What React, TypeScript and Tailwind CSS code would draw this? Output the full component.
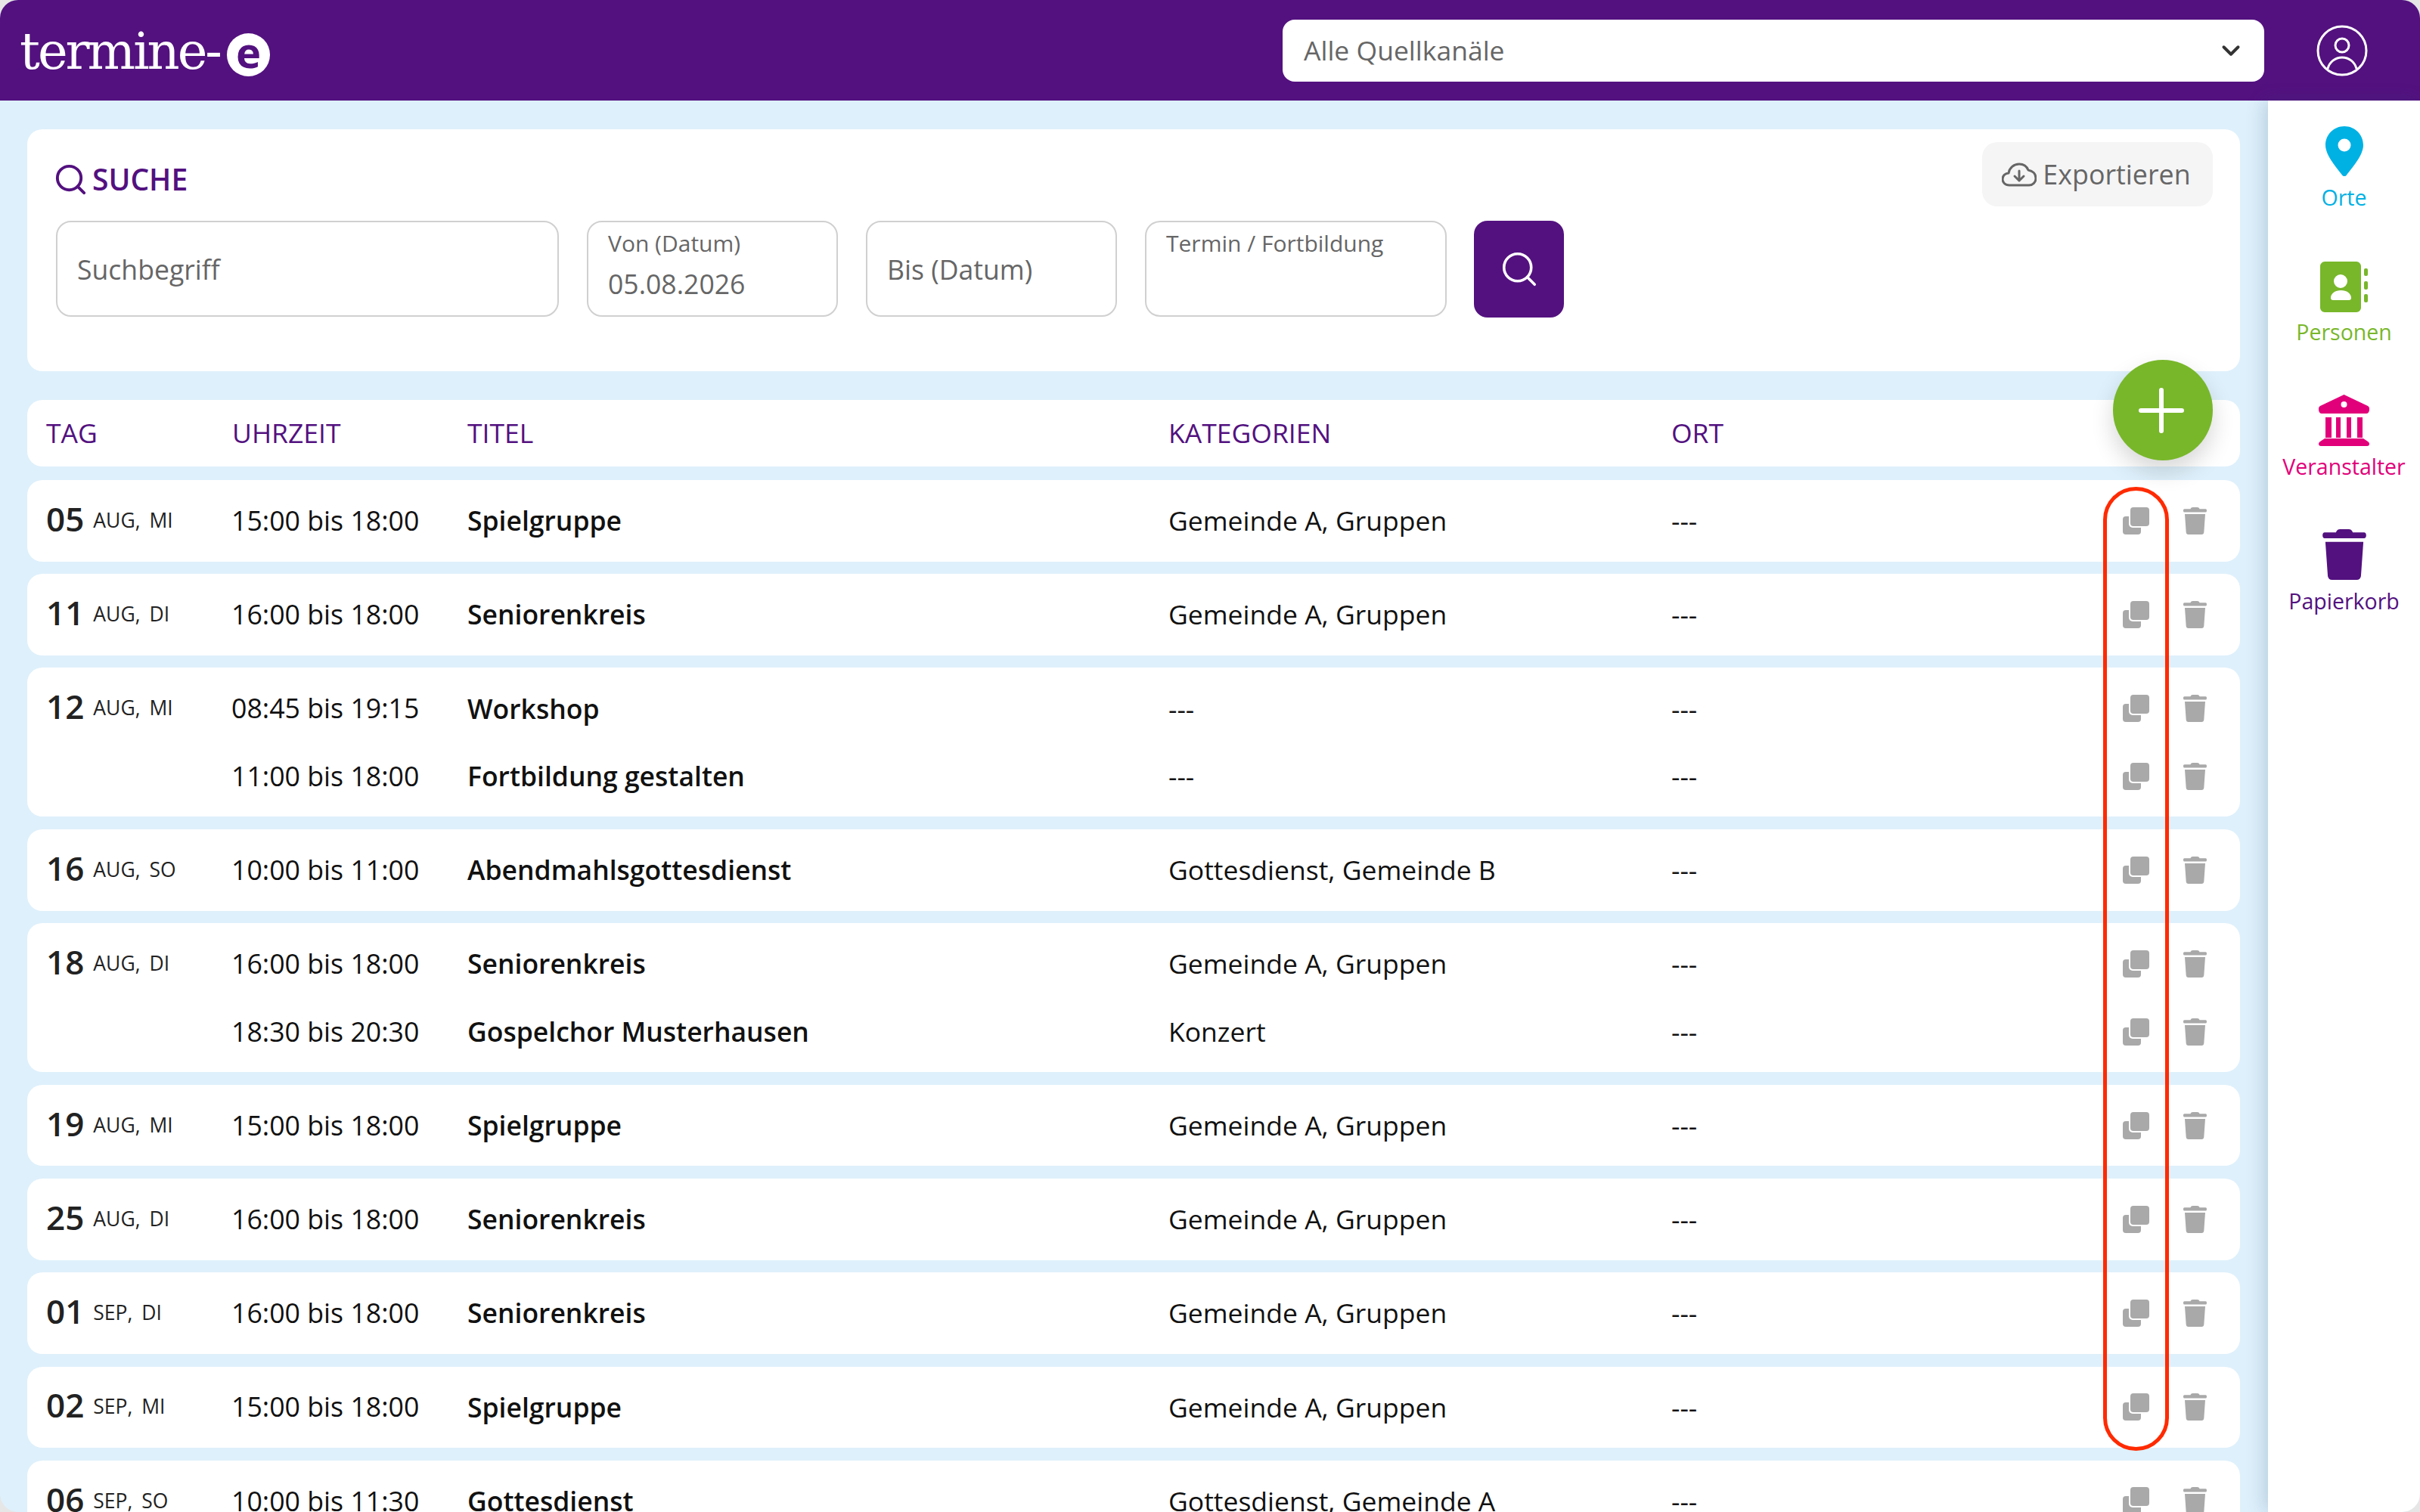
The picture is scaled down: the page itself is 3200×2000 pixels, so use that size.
import { ChevronDown, Search } from "lucide-react";

const sans = "font-['Open_Sans',sans-serif]";

type Line = { time: string; title: string; cats: string };
type Row = { day: string; label: string; lines: Line[] };

const catA = "Gemeinde A, Gruppen";

const rows: Row[] = [
	{ day: "05", label: "AUG, MI", lines: [{ time: "15:00 bis 18:00", title: "Spielgruppe", cats: catA }] },
	{ day: "11", label: "AUG, DI", lines: [{ time: "16:00 bis 18:00", title: "Seniorenkreis", cats: catA }] },
	{
		day: "12",
		label: "AUG, MI",
		lines: [
			{ time: "08:45 bis 19:15", title: "Workshop", cats: "---" },
			{ time: "11:00 bis 18:00", title: "Fortbildung gestalten", cats: "---" },
		],
	},
	{ day: "16", label: "AUG, SO", lines: [{ time: "10:00 bis 11:00", title: "Abendmahlsgottesdienst", cats: "Gottesdienst, Gemeinde B" }] },
	{
		day: "18",
		label: "AUG, DI",
		lines: [
			{ time: "16:00 bis 18:00", title: "Seniorenkreis", cats: catA },
			{ time: "18:30 bis 20:30", title: "Gospelchor Musterhausen", cats: "Konzert" },
		],
	},
	{ day: "19", label: "AUG, MI", lines: [{ time: "15:00 bis 18:00", title: "Spielgruppe", cats: catA }] },
	{ day: "25", label: "AUG, DI", lines: [{ time: "16:00 bis 18:00", title: "Seniorenkreis", cats: catA }] },
	{ day: "01", label: "SEP, DI", lines: [{ time: "16:00 bis 18:00", title: "Seniorenkreis", cats: catA }] },
	{ day: "02", label: "SEP, MI", lines: [{ time: "15:00 bis 18:00", title: "Spielgruppe", cats: catA }] },
	{ day: "06", label: "SEP, SO", lines: [{ time: "10:00 bis 11:30", title: "Gottesdienst", cats: "Gottesdienst, Gemeinde A" }] },
];

function CopyIcon() {
	return (
		<svg viewBox="0 0 35 36" className="w-[35px] h-[36px]">
			<rect x="0" y="12" width="24" height="24" rx="4" fill="#a9a9a9" />
			<rect x="8" y="0" width="27" height="27" rx="5" fill="#fff" />
			<rect x="10" y="0" width="25" height="25" rx="4" fill="#a9a9a9" />
		</svg>
	);
}

function TrashIcon({ className }: { className: string }) {
	return (
		<svg viewBox="0 0 31 36" className={className}>
			<path d="M9.500 2.300C10 .8 11 0 12.500 0h6c1.500 0 2.500.8 3 2.300h8c.9 0 1.500.9 1.500 2.100s-.6 2.100-1.500 2.100h-28C.6 6.500 0 5.600 0 4.400s.6-2.100 1.500-2.100z" />
			<path d="M2 9h27l-1.700 24c-.1 1.800-1.300 3-3 3H6.700c-1.700 0-2.900-1.200-3-3z" />
		</svg>
	);
}

function Field({ label, value, className }: { label?: string; value?: string; className: string }) {
	return (
		<div className={`h-[127px] rounded-[20px] border-2 border-[#d0d0d0] px-[26px] flex flex-col justify-center text-[#666] ${label ? "pb-[10px]" : ""} ${className}`}>
			{label && <div className="text-[30px] leading-[40px] mb-[9px]">{label}</div>}
			{value && <div className="text-[35.600px] leading-[48px]">{value}</div>}
		</div>
	);
}

function SideItem({ label, color, icon }: { label: string; color: string; icon: React.ReactNode }) {
	return (
		<div className={`h-[178px] flex flex-col items-center ${color}`}>
			<div className="h-[70px] flex items-center justify-center">{icon}</div>
			<div className="text-[28.500px] leading-[40px] mt-[6px]">{label}</div>
		</div>
	);
}

export default function App() {
	return (
		<div className="bg-[#e6e6e6] h-[2000px] w-[3200px] overflow-hidden">
			<div className={`${sans} relative h-[2000px] rounded-[24px] overflow-hidden bg-[#def0fb] flex flex-col`}>
				<header className="h-[133px] shrink-0 bg-[#53117f] flex items-center pl-[26px]">
					<div className="flex items-center text-white">
						<span className="font-['DejaVu_Serif',serif] text-[67px] leading-none tracking-[-3px] pt-[4px]">termine-</span>
						<span className="w-[57px] h-[57px] ml-[9px] rounded-full bg-white text-[#53117f] flex items-center justify-center text-[56px] font-bold leading-none pb-[8px] mt-[11px]">e</span>
					</div>
					<div className="ml-auto w-[1298px] h-[82px] bg-white rounded-[16px] flex items-center justify-between pl-[28px] pr-[25px] text-[35.500px] text-[#666]">
						<span>Alle Quellkanäle</span>
						<ChevronDown className="w-[38px] h-[38px] text-[#333]" strokeWidth={2.500} />
					</div>
					<div className="w-[206px] flex justify-center">
						<svg viewBox="0 0 68 68" className="w-[68px] h-[68px] fill-none stroke-white" strokeWidth="3">
							<circle cx="34" cy="34" r="32" />
							<circle cx="34" cy="27" r="9" />
							<path d="M15 58c2-9 10-15 19-15s17 6 19 15" />
						</svg>
					</div>
				</header>

				<div className="flex flex-1 min-h-0">
					<main className="relative flex-1 min-w-0 pt-[38px] pl-[36px] pr-[37px]">
						<section className="h-[320px] bg-white rounded-[20px] flex items-start justify-between pt-[17px] pr-[36px] pl-[38px]">
							<div>
								<div className="flex items-center h-[70px] mt-[14px] text-[#53117f] text-[39px] font-semibold gap-[5px]">
									<Search className="w-[47px] h-[47px] -ml-[4px]" strokeWidth={2} />
									<span>SUCHE</span>
								</div>
								<div className="flex mt-[20px] gap-[37px]">
									<Field value="Suchbegriff" className="w-[665px]" />
									<Field label="Von (Datum)" value="05.08.2026" className="w-[332px]" />
									<Field value="Bis (Datum)" className="w-[332px]" />
									<div className="w-[399px] h-[127px] rounded-[20px] border-2 border-[#d0d0d0] px-[26px] pt-[8px] text-[30px] leading-[40px] text-[#666]">Termin / Fortbildung</div>
									<button className="w-[119px] h-[128px] -ml-[1px] rounded-[18px] bg-[#53117f] flex items-center justify-center">
										<Search className="w-[54px] h-[54px] text-white" strokeWidth={1.600} />
									</button>
								</div>
							</div>
							<div className="w-[305px] h-[85px] rounded-[20px] bg-[#f5f5f5] flex items-center justify-center gap-[8px] pr-[3px] text-[35.800px] text-[#666]">
								<svg viewBox="0 0 46 32" className="w-[46px] h-[32px] fill-none stroke-[#666]" strokeWidth="3" strokeLinecap="round" strokeLinejoin="round">
									<path d="M10 30C4 30 1 26 1 22C1 17 5 14 9 14C10 7 16 2 23 2C29 2 33 5 35 10C41 11 45 15 45 21C45 26 41 30 36 30Z" />
									<path d="M23 11v13M17 18l6 6 6-6" />
								</svg>
								<span>Exportieren</span>
							</div>
						</section>

						<div className="mt-[38px] h-[88px] bg-white rounded-[20px] pl-[25px] grid grid-cols-[246px_311px_927px_665px_1fr] items-center text-[#53117f] text-[35.500px]">
							<span>TAG</span>
							<span>UHRZEIT</span>
							<span>TITEL</span>
							<span>KATEGORIEN</span>
							<span>ORT</span>
						</div>

						<div className="mt-[18px] flex flex-col gap-[16.700px]">
							{rows.map((row) => (
								<div key={row.day + row.label} className="bg-white rounded-[20px] py-[9px] shrink-0">
									{row.lines.map((line, i) => (
										<div key={line.time} className="h-[89.500px] pl-[25px] pr-[44px] grid grid-cols-[246px_311px_927px_665px_1fr] items-center text-[35.500px] text-[#111]">
											<div className="flex items-baseline gap-[12px] text-[#222] whitespace-nowrap">
												{i === 0 && (
													<>
														<span className="text-[44px] font-semibold leading-none">{row.day}</span>
														<span className="text-[26.500px] [word-spacing:5px] relative -top-[5px]">{row.label}</span>
													</>
												)}
											</div>
											<span className="text-[35.700px] -ml-[1px]">{line.time}</span>
											<span className="font-semibold">{line.title}</span>
											<span>{line.cats}</span>
											<div className="flex items-center justify-between">
												<span>---</span>
												<div className="flex items-center gap-[45px]">
													<CopyIcon />
													<TrashIcon className="w-[31px] h-[36px] fill-[#a9a9a9]" />
												</div>
											</div>
										</div>
									))}
								</div>
							))}
						</div>

						<button className="absolute left-[2794px] top-[343px] w-[132px] h-[133px] rounded-full bg-[#78b72a] shadow-[0_14px_30px_rgba(0,0,0,0.16)] flex items-center justify-center pr-[5px]">
							<svg viewBox="0 0 60 60" className="w-[60px] h-[60px] stroke-white" strokeWidth="6" strokeLinecap="round">
								<path d="M30 3v54M3 30h54" />
							</svg>
						</button>
						<div className="absolute left-[2781px] top-[511px] w-[87px] h-[1275px] rounded-[44px] border-[5px] border-[#ff2a00]" />
					</main>

					<aside className="relative w-[201px] shrink-0 bg-white pt-[32px] shadow-[-6px_0_22px_rgba(40,80,120,0.2)]">
						<SideItem
							label="Orte"
							color="text-[#00b1e4]"
							icon={
								<svg viewBox="0 0 50 66" className="w-[50px] h-[66px] fill-[#00b1e4]">
									<path fillRule="evenodd" d="M25 0C11 0 0 11 0 25C0 39 16 56 22 64.500C23.500 66.500 26.500 66.500 28 64.500C34 56 50 39 50 25C50 11 39 0 25 0ZM25 16.500a8.500 8.500 0 1 1 0 17 8.500 8.500 0 0 1 0-17Z" />
								</svg>
							}
						/>
						<SideItem
							label="Personen"
							color="text-[#78b72a]"
							icon={
								<svg viewBox="0 0 63 67" className="w-[63px] h-[67px] fill-[#78b72a] mt-[2px]">
									<path fillRule="evenodd" d="M6 0h42c3 0 6 3 6 6v55c0 3-3 6-6 6H6c-3 0-6-3-6-6V6c0-3 3-6 6-6zm21 17a9 9 0 1 0 0 18 9 9 0 0 0 0-18zM14 48c0 2 1 3 3 3h21c2 0 3-1 3-3 0-6-6-10-13.500-10S14 42 14 48z" />
									<rect x="58" y="9" width="5" height="10" rx="2" />
									<rect x="58" y="26" width="5" height="11" rx="2" />
									<rect x="58" y="43" width="5" height="11" rx="2" />
								</svg>
							}
						/>
						<SideItem
							label="Veranstalter"
							color="text-[#e2007a]"
							icon={
								<svg viewBox="0 0 67 68" className="w-[67px] h-[68px] fill-[#e2007a] -mt-[1px]">
									<path fillRule="evenodd" d="M33.500 0L65 15c2 1 2 3 2 4v1c0 3-2 5-4 5H4c-2 0-4-2-4-5v-1c0-1 0-3 2-4zm0 9a4 4 0 1 0 0 8 4 4 0 0 0 0-8z" />
									<rect x="9" y="30" width="8" height="27" />
									<rect x="23" y="30" width="6" height="27" />
									<rect x="37" y="30" width="6" height="27" />
									<rect x="51" y="30" width="7" height="27" />
									<path d="M8 58h51l6 4c2 1 2 3 2 3 0 2-1 3-3 3H3c-2 0-3-1-3-3 0 0 0-2 2-3z" />
								</svg>
							}
						/>
						<SideItem label="Papierkorb" color="text-[#53117f]" icon={<TrashIcon className="w-[58px] h-[67px] fill-[#53117f] -mt-[2px]" />} />
					</aside>
				</div>
			</div>
		</div>
	);
}
